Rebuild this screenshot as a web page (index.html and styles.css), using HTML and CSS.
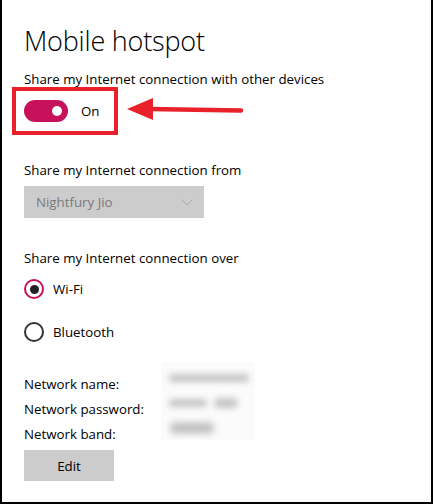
FILE: index.html
```html
<!DOCTYPE html>
<html>
<head>
<meta charset="utf-8">
<link rel="stylesheet" href="styles.css">
</head>
<body>
<div class="page">
  <h1 class="title">Mobile hotspot</h1>
  <div class="label l1">Share my Internet connection with other devices</div>
  <div class="toggle-area">
    <div class="highlight">
      <div class="toggle"><span class="knob"></span></div>
      <span class="toggle-text">On</span>
    </div>
    <svg class="arrow" width="120" height="26" viewBox="0 0 120 26">
      <polygon points="0,12 26,1 26,23" fill="#e8212b"/>
      <line x1="22" y1="12" x2="114" y2="13.5" stroke="#e8212b" stroke-width="4.5" stroke-linecap="round"/>
    </svg>
  </div>
  <div class="label l2">Share my Internet connection from</div>
  <div class="dropdown">
    <span>Nightfury Jio</span>
    <svg class="chev" width="12" height="7" viewBox="0 0 12 7"><polyline points="0.5,0.5 6,6 11.5,0.5" fill="none" stroke="#a8a8a8" stroke-width="1"/></svg>
  </div>
  <div class="label l3">Share my Internet connection over</div>
  <div class="radios">
    <div class="radio-row"><span class="radio on"><span class="dot"></span></span><span>Wi-Fi</span></div>
    <div class="radio-row"><span class="radio"></span><span>Bluetooth</span></div>
  </div>
  <div class="info">
    <div class="info-labels">
      <div>Network name:</div>
      <div>Network password:</div>
      <div>Network band:</div>
    </div>
    <div class="blur-box">
      <span class="b b1"></span>
      <span class="b b2"></span><span class="b b3"></span>
      <span class="b b4"></span>
    </div>
  </div>
  <div class="edit">Edit</div>
</div>
</body>
</html>
```

FILE: styles.css
```css
html, body { margin: 0; padding: 0; background: #fff; }
.page {
  box-sizing: border-box;
  width: 433px;
  height: 504px;
  border-left: 2px solid #000;
  border-right: 2px solid #000;
  border-bottom: 2px solid #000;
  padding-left: 22px;
  font-family: "Open Sans", "Noto Sans", sans-serif;
  font-size: 13.3px;
  color: #000;
  overflow: hidden;
}
.title {
  margin: 0;
  padding-top: 22px;
  font-size: 27px;
  font-weight: 300;
  line-height: 38px;
  letter-spacing: -0.2px;
}
.label { line-height: 20px; }
.l1 { margin-top: 9px; }
.toggle-area { position: relative; height: 48px; }
.highlight {
  box-sizing: border-box;
  position: absolute;
  left: -12px; top: -2px;
  width: 106px; height: 48px;
  border: 4px solid #e8212b;
  display: flex; align-items: center;
  padding-left: 8px;
}
.toggle {
  width: 44px; height: 22px;
  border-radius: 11px;
  background: #c7115a;
  position: relative;
  flex: none;
}
.knob {
  position: absolute;
  right: 6px; top: 6px;
  width: 10px; height: 10px;
  border-radius: 50%;
  background: #fff;
}
.toggle-text { margin-left: 13px; }
.arrow { position: absolute; left: 103px; top: 8px; }
.l2 { margin-top: 23px; }
.dropdown {
  margin-top: 6px;
  width: 180px; height: 32px;
  background: #cccccc;
  color: #7a7a7a;
  display: flex; align-items: center; justify-content: space-between;
  box-sizing: border-box;
  padding: 0 11px 0 12px;
}
.l3 { margin-top: 30px; }
.radios { margin-top: 11px; display: flex; flex-direction: column; gap: 23px; }
.radio-row { display: flex; align-items: center; gap: 9px; height: 20px; }
.radio {
  box-sizing: border-box;
  width: 20px; height: 20px;
  border-radius: 50%;
  border: 2px solid #333;
  display: flex; align-items: center; justify-content: center;
}
.radio.on { border-color: #c7115a; }
.dot { width: 9px; height: 9px; border-radius: 50%; background: #222; }
.info { margin-top: 28px; display: flex; }
.info-labels { width: 137px; line-height: 25px; padding-top: 2px; }
.blur-box {
  width: 94px; height: 78px;
  background: #fbfbfb;
  margin-top: -8px;
  position: relative;
}
.b { position: absolute; background: #c4c4c4; border-radius: 5px; filter: blur(3px); height: 8px; }
.b1 { left: 8px; top: 12px; width: 80px; }
.b2 { left: 8px; top: 37px; width: 38px; }
.b3 { left: 53px; top: 36px; width: 24px; height: 10px; }
.b4 { left: 9px; top: 60px; width: 44px; height: 12px; }
.edit {
  margin-top: 3px;
  width: 90px; height: 31px;
  background: #cccccc;
  display: flex; align-items: center; justify-content: center;
}
```
